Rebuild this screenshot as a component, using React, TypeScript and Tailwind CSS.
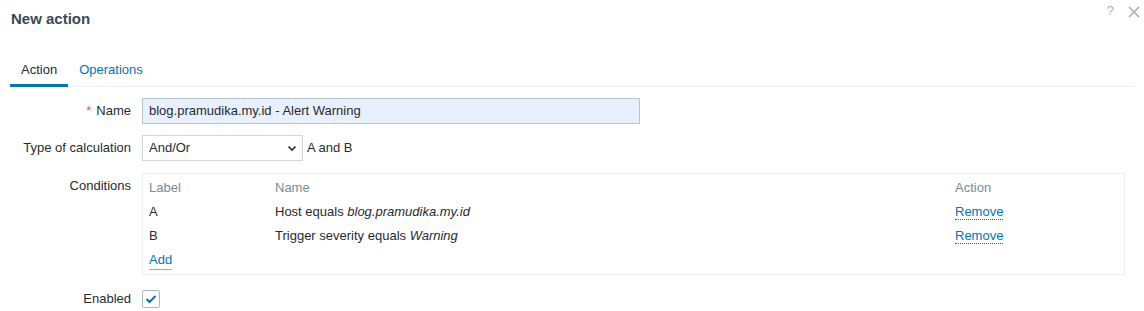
import React from 'react';

function Row({ label, required, children, top }: { label: string; required?: boolean; children: React.ReactNode; top?: boolean }) {
  return (
    <div className={`flex ${top ? 'items-start' : 'items-center'}`}>
      <div className={`w-[142px] shrink-0 pr-[11px] text-right ${top ? 'pt-[4px]' : ''}`}>
        {required && <span className="mr-[5px] text-[#e45959]">*</span>}
        {label}
      </div>
      {children}
    </div>
  );
}

export default function App() {
  return (
    <div className="h-[311px] w-[1144px] overflow-hidden bg-white font-['Liberation_Sans',Arial,sans-serif] text-[13px] leading-[18px] text-[#1f2c33]">
      <div className="flex items-start justify-between pl-[11px] pr-[4px]">
        <h1 className="mt-[9px] text-[15px] font-bold leading-[20px] text-[#384a57]">New action</h1>
        <div className="mt-[2px] flex items-center gap-[14px] text-[#a5b0b8]">
          <span className="text-[13px]">?</span>
          <svg width="12" height="12" viewBox="0 0 12 12" className="mt-[1px]">
            <path d="M1 1 L11 11 M11 1 L1 11" stroke="currentColor" strokeWidth="1.6" />
          </svg>
        </div>
      </div>

      <div className="mt-[32px] ml-[10px] mr-[9px] flex border-b border-[#ebeef0]">
        <div className="-mb-px border-b-[3px] border-[#0275b8] px-[11px] pb-[5px]">Action</div>
        <div className="-mb-px px-[11px] pb-[5px] text-[#0275b8]">Operations</div>
      </div>

      <div className="mt-[11px] flex flex-col">
        <Row label="Name" required>
          <div className="flex h-[26px] w-[498px] items-center border border-[#b4c6d4] bg-[#e8f0fe] px-[6px]">
            blog.pramudika.my.id - Alert Warning
          </div>
        </Row>

        <div className="mt-[11px]">
          <Row label="Type of calculation">
            <div className="flex h-[26px] w-[161px] items-center justify-between border border-[#cfd6db] bg-white pl-[6px] pr-[5px]">
              <span>And/Or</span>
              <svg width="10" height="10" viewBox="0 0 10 10">
                <path d="M1.5 3.5 L5 7 L8.5 3.5" fill="none" stroke="#1f2c33" strokeWidth="1.6" />
              </svg>
            </div>
            <span className="ml-[4px]">A and B</span>
          </Row>
        </div>

        <div className="mt-[12px]">
          <Row label="Conditions" top>
            <div className="w-[983px] border border-[#ebeef0] px-[6px] py-[2px]">
              <div className="flex h-[24px] items-center text-[#768d99]">
                <div className="w-[126px]">Label</div>
                <div className="w-[680px]">Name</div>
                <div>Action</div>
              </div>
              <div className="flex h-[24px] items-center">
                <div className="w-[126px]">A</div>
                <div className="w-[680px]">
                  Host equals <i>blog.pramudika.my.id</i>
                </div>
                <div>
                  <span className="border-b border-dotted border-[#0275b8] text-[#0275b8]">Remove</span>
                </div>
              </div>
              <div className="flex h-[24px] items-center">
                <div className="w-[126px]">B</div>
                <div className="w-[680px]">
                  Trigger severity equals <i>Warning</i>
                </div>
                <div>
                  <span className="border-b border-dotted border-[#0275b8] text-[#0275b8]">Remove</span>
                </div>
              </div>
              <div className="flex h-[24px] items-center">
                <span className="border-b border-[#7fb5dc] text-[#0275b8]">Add</span>
              </div>
            </div>
          </Row>
        </div>

        <div className="mt-[15px]">
          <Row label="Enabled">
            <div className="flex h-[18px] w-[18px] items-center justify-center rounded-[2px] border border-[#a9bac6] bg-white">
              <svg width="12" height="10" viewBox="0 0 12 10">
                <path d="M1.5 5 L4.5 8 L10.5 2" fill="none" stroke="#0275b8" strokeWidth="2" />
              </svg>
            </div>
          </Row>
        </div>
      </div>
    </div>
  );
}
